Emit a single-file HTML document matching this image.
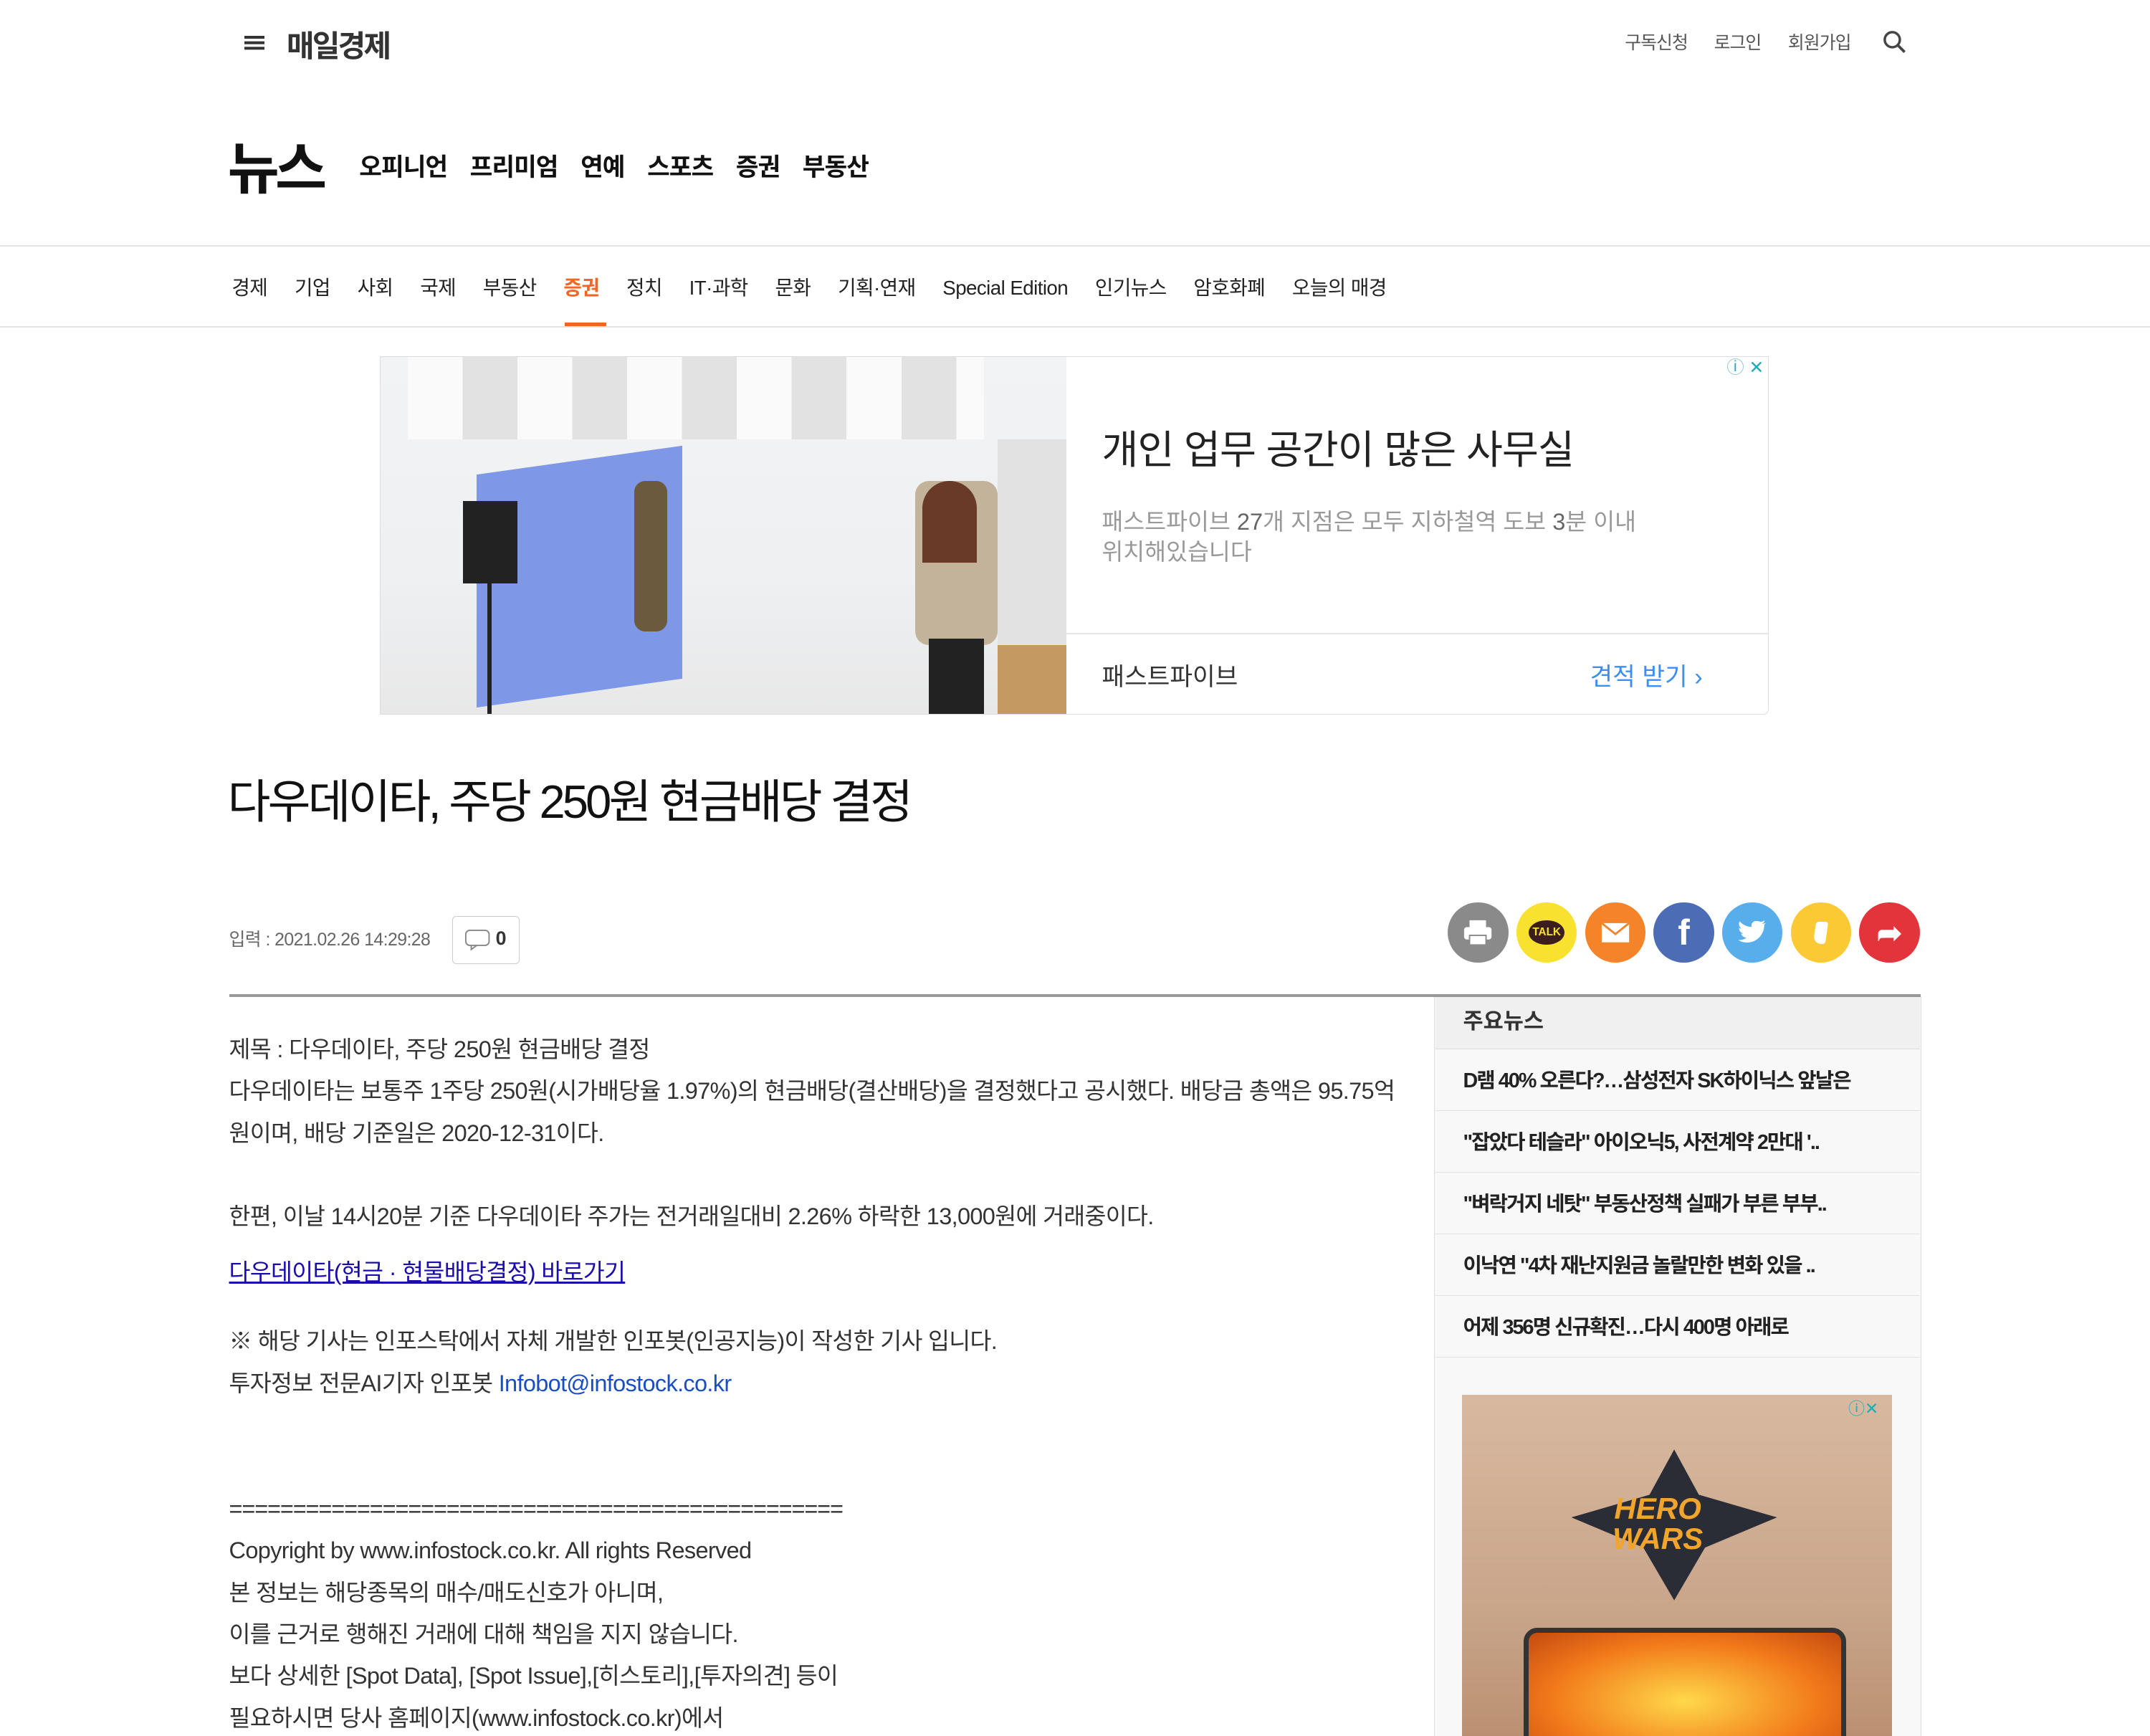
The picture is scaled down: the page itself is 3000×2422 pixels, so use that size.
<!DOCTYPE html>
<html><head><meta charset="utf-8"><style>
html,body{margin:0;padding:0;background:#fff;overflow:hidden}
#w{position:relative;width:1568px;height:1266px;zoom:1.91327;font-family:"Liberation Sans","Noto Sans CJK KR",sans-serif;color:#222;overflow:hidden}
.a{position:absolute;white-space:nowrap}
.circ{position:absolute;width:44px;height:44px;border-radius:50%;top:658px;display:flex;align-items:center;justify-content:center}
.body p{margin:0;font-size:17px;line-height:30.5px;color:#333;letter-spacing:-0.35px}
.si{position:absolute;left:1047px;width:353px;height:44px;background:#f8f8f8;border-bottom:1px solid #e2e2e2;font-size:15px;font-weight:bold;letter-spacing:-1px;line-height:44px;padding-left:20px;box-sizing:border-box;color:#222}
</style></head><body><div id="w">
<div class="a" style="left:178px;top:26px;width:15px;height:2px;background:#333;box-shadow:0 4px 0 #333,0 8px 0 #333"></div>
<div class="a" style="left:209px;top:16px;font-size:22px;font-weight:bold;color:#333;letter-spacing:-1.5px">매일경제</div>
<div class="a" style="left:1185px;top:21px;font-size:13px;color:#555;letter-spacing:-0.5px">구독신청</div>
<div class="a" style="left:1250px;top:21px;font-size:13px;color:#555;letter-spacing:-0.5px">로그인</div>
<div class="a" style="left:1304px;top:21px;font-size:13px;color:#555;letter-spacing:-0.5px">회원가입</div>
<svg class="a" style="left:1373px;top:22px" width="18" height="18" viewBox="0 0 18 18"><circle cx="7" cy="7" r="5.5" fill="none" stroke="#444" stroke-width="1.8"/><path d="M11 11l5 5" stroke="#444" stroke-width="2"/></svg>
<div class="a" style="left:166px;top:90px;font-size:41px;font-weight:bold;color:#111;letter-spacing:-3px">뉴스</div>
<div class="a" style="left:262px;top:107px;font-size:18px;font-weight:bold;color:#111;word-spacing:12px;letter-spacing:-0.5px">오피니언 프리미엄 연예 스포츠 증권 부동산</div>
<div class="a" style="left:0;top:179px;width:1568px;height:1px;background:#e3e3e3"></div>
<div class="a" style="left:169px;top:198px;font-size:14.5px;color:#222;word-spacing:16px;letter-spacing:-0.3px">경제 기업 사회 국제 부동산 <span style="color:#f26522;font-weight:bold">증권</span> 정치 IT·과학 문화 기획·연재 <span style="word-spacing:0">Special Edition</span> 인기뉴스 암호화폐 <span style="word-spacing:0">오늘의 매경</span></div>
<div class="a" style="left:412px;top:235px;width:30px;height:3px;background:#f26522"></div>
<div class="a" style="left:0;top:238px;width:1568px;height:1px;background:#e3e3e3"></div>
<div class="a" style="left:277px;top:260px;width:1013px;height:261px;border:1px solid #ddd;box-sizing:border-box;border-radius:0 0 4px 0;overflow:hidden">
 <div class="a" style="left:0;top:0;width:500px;height:261px;background:linear-gradient(#f2f3f5,#eef0f2 60%,#e8e8e8)">
  <div class="a" style="left:20px;top:0;width:420px;height:60px;background:repeating-linear-gradient(90deg,#fafafa 0 40px,#e2e2e2 40px 80px)"></div>
  <div class="a" style="left:70px;top:75px;width:150px;height:170px;background:#7e97e6;transform:skewY(-8deg)"></div>
  <div class="a" style="left:185px;top:90px;width:24px;height:110px;background:#6b5a3e;border-radius:8px"></div>
  <div class="a" style="left:60px;top:105px;width:40px;height:60px;background:#222"></div>
  <div class="a" style="left:78px;top:160px;width:3px;height:100px;background:#222"></div>
  <div class="a" style="left:390px;top:90px;width:60px;height:120px;background:#c4b39b;border-radius:10px"></div>
  <div class="a" style="left:395px;top:90px;width:40px;height:60px;background:#6a3a28;border-radius:20px 20px 0 0"></div>
  <div class="a" style="left:400px;top:205px;width:40px;height:56px;background:#222"></div>
  <div class="a" style="left:450px;top:210px;width:50px;height:51px;background:#c59a62"></div>
  <div class="a" style="left:450px;top:60px;width:50px;height:150px;background:#e2e2e2"></div>
 </div>
 <div class="a" style="left:526px;top:44px;font-size:29px;color:#222;letter-spacing:-0.5px">개인 업무 공간이 많은 사무실</div>
 <div class="a" style="left:526px;top:109px;font-size:17px;color:#999;line-height:22px">패스트파이브 <b style="color:#666;font-weight:normal">27</b>개 지점은 모두 지하철역 도보 <b style="color:#666;font-weight:normal">3</b>분 이내<br>위치해있습니다</div>
 <div class="a" style="left:500px;top:201px;width:513px;height:1px;background:#e5e5e5"></div>
 <div class="a" style="left:526px;top:218px;font-size:18px;color:#333">패스트파이브</div>
 <div class="a" style="left:882px;top:218px;font-size:18px;color:#3d8ef0">견적 받기 ›</div>
 <div class="a" style="left:982px;top:1px;font-size:11px;color:#2ab;border:1px solid #9cd;width:11px;height:11px;border-radius:50%;text-align:center;line-height:11px">i</div>
 <div class="a" style="left:998px;top:0;font-size:13px;color:#2ab">✕</div>
</div>
<div class="a" style="left:166px;top:557px;font-size:34px;color:#111;letter-spacing:-2px">다우데이타, 주당 250원 현금배당 결정</div>
<div class="a" style="left:167px;top:675px;font-size:13px;color:#666;letter-spacing:-0.3px">입력 : 2021.02.26 14:29:28</div>
<div class="a" style="left:330px;top:668px;width:49px;height:35px;border:1px solid #ccc;border-radius:3px;box-sizing:border-box"><svg class="a" style="left:8px;top:9px" width="20" height="16"><rect x="1" y="1" width="17" height="11" rx="3" fill="none" stroke="#888"/><path d="M5 12l0 3 4-3" fill="none" stroke="#888"/></svg><span class="a" style="left:31px;top:8px;font-size:14px;font-weight:bold;color:#333">0</span></div>
<div class="circ" style="left:1056px;background:#8a8a8a"><svg width="22" height="20"><rect x="5" y="1" width="12" height="5" fill="#fff"/><rect x="1" y="6" width="20" height="9" rx="2" fill="#fff"/><rect x="5" y="12" width="12" height="7" fill="#fff" stroke="#8a8a8a"/></svg></div>
<div class="circ" style="left:1106px;background:#f9e12f"><div style="background:#3c1e1e;color:#f9e12f;font-size:8px;font-weight:bold;border-radius:50%;width:26px;height:18px;line-height:18px;text-align:center">TALK</div></div>
<div class="circ" style="left:1156px;background:#f4832a"><svg width="22" height="16"><rect x="1" y="1" width="20" height="14" fill="#fff"/><path d="M1 1l10 8 10-8" fill="none" stroke="#f4832a" stroke-width="1.5"/></svg></div>
<div class="circ" style="left:1206px;background:#4c6db6;color:#fff;font-size:26px;font-weight:bold">f</div>
<div class="circ" style="left:1256px;background:#57aeea"><svg width="22" height="18" viewBox="0 0 24 20"><path d="M23 2c-1 .5-2 .7-3 .8 1-.6 2-1.6 2-2.7-1 .6-2 1-3.2 1.2C16 0 12.6.2 11.5 3c-.3 1-.2 2-.1 2.4C7.5 5.2 4 3.4 1.8.8c-1.2 2-.5 4.6 1.4 5.9-.7 0-1.5-.2-2-.6 0 2.3 1.6 4.2 3.7 4.6-.7.2-1.4.2-2 .1.6 1.9 2.4 3.2 4.4 3.2C5.5 15.5 3 16.2.6 15.9 2.7 17.3 5.2 18 7.7 18c9 0 14-7.5 14-14v-.7C22.6 2.7 23 2.3 23 2z" fill="#fff"/></svg></div>
<div class="circ" style="left:1306px;background:#fbc933"><div style="width:9px;height:16px;background:#fff;border-radius:2px 2px 2px 6px;transform:skewX(-8deg)"></div></div>
<div class="circ" style="left:1356px;background:#e2343a;color:#fff;font-size:22px;font-weight:bold">➦</div>
<div class="a" style="left:167px;top:725px;width:1234px;height:2px;background:#999"></div>
<div class="a body" style="left:167px;top:750px;width:870px">
<p>제목 : 다우데이타, 주당 250원 현금배당 결정</p>
<p>다우데이타는 보통주 1주당 250원(시가배당율 1.97%)의 현금배당(결산배당)을 결정했다고 공시했다. 배당금 총액은 95.75억<br>원이며, 배당 기준일은 2020-12-31이다.</p>
<p>&nbsp;</p>
<p>한편, 이날 14시20분 기준 다우데이타 주가는 전거래일대비 2.26% 하락한 13,000원에 거래중이다.</p>
<p style="margin-top:10px"><span style="color:#1a0dab;text-decoration:underline">다우데이타(현금 · 현물배당결정) 바로가기</span></p>
<p style="margin-top:20px">※ 해당 기사는 인포스탁에서 자체 개발한 인포봇(인공지능)이 작성한 기사 입니다.</p>
<p>투자정보 전문AI기자 인포봇 <span style="color:#1a4fc4">Infobot@infostock.co.kr</span></p>
<p>&nbsp;</p><p>&nbsp;</p>
<p style="letter-spacing:-0.6px">================================================</p>
<p>Copyright by www.infostock.co.kr. All rights Reserved</p>
<p>본 정보는 해당종목의 매수/매도신호가 아니며,</p>
<p>이를 근거로 행해진 거래에 대해 책임을 지지 않습니다.</p>
<p>보다 상세한 [Spot Data], [Spot Issue],[히스토리],[투자의견] 등이</p>
<p>필요하시면 당사 홈페이지(www.infostock.co.kr)에서</p>
</div>
<div class="a" style="left:1046px;top:727px;width:354px;height:540px;border-left:1px solid #ddd;border-right:1px solid #ddd;background:#f8f8f8"></div>
<div class="a" style="left:1047px;top:727px;width:353px;height:38px;background:#f0f0f0;border-bottom:1px solid #ddd;font-size:16px;font-weight:bold;line-height:36px;padding-left:20px;box-sizing:border-box;color:#333">주요뉴스</div>
<div class="si" style="top:766px">D램 40% 오른다?…삼성전자 SK하이닉스 앞날은</div>
<div class="si" style="top:811px">"잡았다 테슬라" 아이오닉5, 사전계약 2만대 '..</div>
<div class="si" style="top:856px">"벼락거지 네탓" 부동산정책 실패가 부른 부부..</div>
<div class="si" style="top:901px">이낙연 "4차 재난지원금 놀랄만한 변화 있을 ..</div>
<div class="si" style="top:946px">어제 356명 신규확진…다시 400명 아래로</div>
<div class="a" style="left:1066px;top:1017px;width:314px;height:260px;background:linear-gradient(#d8b9a0,#c9a58a 60%,#b98e6e)">
 <div class="a" style="left:80px;top:40px;width:150px;height:110px;background:#2a2d36;clip-path:polygon(50% 0,62% 30%,100% 45%,65% 65%,50% 100%,35% 65%,0 45%,38% 30%)"></div>
 <div class="a" style="left:110px;top:72px;font-size:22px;font-weight:bold;color:#f2a52c;line-height:22px;text-align:center;font-style:italic">HERO<br>WARS</div>
 <div class="a" style="left:45px;top:170px;width:228px;height:100px;background:radial-gradient(#ffd94a,#f27a1a 60%,#c44a10);border:4px solid #333;border-radius:10px"></div>
 <div class="a" style="left:282px;top:0;font-size:12px;color:#2ab">ⓘ✕</div>
</div>
</div></body></html>
